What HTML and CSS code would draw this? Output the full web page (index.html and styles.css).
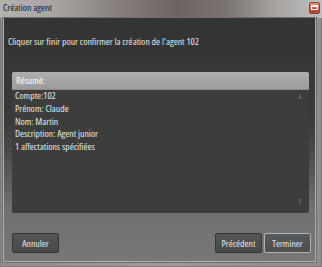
FILE: index.html
```html
<!DOCTYPE html>
<html lang="fr">
<head>
<meta charset="utf-8">
<title>Création agent</title>
<link rel="stylesheet" href="styles.css">
</head>
<body>
<div class="window">
  <div class="titlebar">
    <span class="title">Création agent</span>
    <span class="close"><svg width="7" height="5" viewBox="0 0 7 5"><rect x="0.5" y="0.5" width="6" height="4" fill="none" stroke="#fff" stroke-width="1"/><rect x="1" y="1" width="5" height="1" fill="#fff"/></svg></span>
  </div>
  <div class="client">
    <div class="header">Cliquer sur finir pour confirmer la création de l'agent 102</div>
    <div class="body">
      <div class="list">
        <div class="list-head">Résumé:</div>
        <div class="list-body">
          <div class="lines">
            <div>Compte:102</div>
            <div>Prénom: Claude</div>
            <div>Nom: Martin</div>
            <div>Description: Agent junior</div>
            <div>1 affectations spécifiées</div>
          </div>
          <div class="scroll">
            <span class="tri up"></span>
            <span class="tri down"></span>
          </div>
        </div>
      </div>
      <div class="buttons">
        <button class="btn">Annuler</button>
        <div class="right">
          <button class="btn">Précédent</button>
          <button class="btn focus">Terminer</button>
        </div>
      </div>
    </div>
  </div>
</div>
</body>
</html>
```

FILE: styles.css
```css
html, body {
  margin: 0;
  padding: 0;
  width: 322px;
  height: 267px;
  overflow: hidden;
  background: #8a8a8a;
  font-family: "Open Sans", "Noto Sans", sans-serif;
  font-stretch: 87%;
}
.window {
  width: 322px;
  height: 267px;
  box-sizing: border-box;
  display: flex;
  flex-direction: column;
  background: linear-gradient(90deg, #8f8f8f 0%, #9a9a9a 50%, #8d8d8d 100%);
  border-left: 1px solid #7a7a7a;
  border-right: 1px solid #7a7a7a;
  border-bottom: 1px solid #7a7a7a;
}
.titlebar {
  height: 18px;
  flex: none;
  display: flex;
  align-items: center;
  justify-content: space-between;
  padding: 0 2px 0 3px;
  margin-left: -1px;
  margin-right: -1px;
  background: linear-gradient(90deg, #b4b2af 0%, #a6a3a0 18%, #847d7a 38%, #6c6462 55%, #7a7370 70%, #a7a4a2 86%, #c0bebc 100%);
}
.title {
  font-size: 9.75px;
  color: #151515;
  margin-top: -3px;
}
.close {
  width: 11px;
  height: 12px;
  margin-top: -3px;
  border-radius: 2px;
  background: linear-gradient(#e0907f 0%, #cc5a48 50%, #b8402f 100%);
  border: 1px solid #8a4a40;
  box-sizing: border-box;
  display: flex;
  align-items: center;
  justify-content: center;
}
.client {
  flex: 1;
  margin: 0 5px 4px 2px;
  display: flex;
  flex-direction: column;
  border: 1px solid #b0b0b0;
  border-top: none;
  background: linear-gradient(#343434 0%, #393939 40%, #4a4a4a 55%, #707070 78%, #777777 100%);
  box-shadow: 0 0 0 1px #6e6e6e;
}
.header {
  height: 44px;
  flex: none;
  box-sizing: border-box;
  padding: 17px 0 0 4px;
  font-size: 9.75px;
  line-height: 13px;
  color: #e6e6e6;
  background: #343434;
}
.body {
  flex: 1;
  display: flex;
  flex-direction: column;
  padding: 10px 4px 8px 8px;
}
.list {
  height: 141px;
  margin-right: 2px;
  display: flex;
  flex-direction: column;
  border-radius: 2px;
  overflow: hidden;
  background: #3d3d3d;
}
.list-head {
  height: 18px;
  flex: none;
  box-sizing: border-box;
  padding: 3px 0 0 4px;
  font-size: 9.75px;
  line-height: 12px;
  color: #ffffff;
  background: linear-gradient(#aeb0ae 0%, #a3a5a3 50%, #9b9d9b 100%);
  border-bottom: 1px solid #8c8e8c;
}
.list-body {
  flex: 1;
  display: flex;
}
.lines {
  flex: 1;
  padding: 0 0 0 3px;
  font-size: 9.75px;
  line-height: 12.75px;
  color: #e8e8e8;
}
.scroll {
  width: 14px;
  display: flex;
  flex-direction: column;
  justify-content: space-between;
  align-items: center;
  padding: 3px 0 8px;
  margin-right: 2px;
}
.tri {
  width: 0;
  height: 0;
  border-left: 2.5px solid transparent;
  border-right: 2.5px solid transparent;
}
.tri.up { border-bottom: 6px solid #5a5a5a; }
.tri.down { border-top: 6px solid #5a5a5a; }
.buttons {
  margin-top: 20px;
  display: flex;
  justify-content: space-between;
}
.right {
  display: flex;
  gap: 2px;
}
.btn {
  height: 20px;
  width: 47px;
  padding: 0;
  font-family: "Open Sans", "Noto Sans", sans-serif;
  font-stretch: 87%;
  font-size: 9.75px;
  color: #e4e4e4;
  background: linear-gradient(#545454, #4a4a4a);
  border: 1px solid #343434;
  border-radius: 2px;
}
.btn.focus {
  border-color: #a8b6c0;
  background: linear-gradient(#5a5a5a, #4e4e4e);
}
```
